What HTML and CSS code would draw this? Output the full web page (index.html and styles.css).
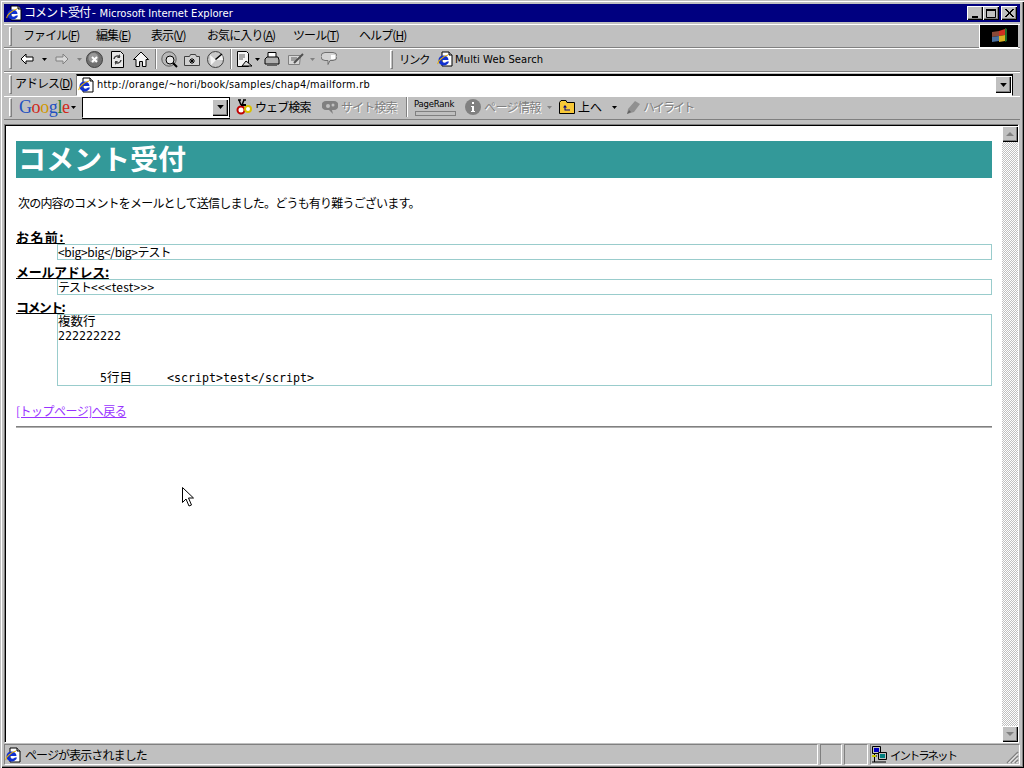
FILE: index.html
```html
<!DOCTYPE html>
<html lang="ja">
<head>
<meta charset="utf-8">
<title>コメント受付</title>
<link rel="stylesheet" href="styles.css">
</head>
<body>
<svg class="defs" width="0" height="0">
  <symbol id="ie" viewBox="0 0 16 16">
    <path d="M5 1h7l3 3v11H5z" fill="#fff" stroke="#000"/>
    <path d="M12 1v3h3" fill="#c0c0c0" stroke="#000"/>
    <path d="M1.500 9a5 4.500 0 0 1 10 0H4.500a3 2.500 0 0 0 5.500 1.500h2A5 4.500 0 0 1 1.500 9z" fill="#1030d0"/>
    <path d="M1 13C0 11 6 5 11 4" fill="none" stroke="#e8b000" stroke-width="1.200"/>
  </symbol>
  <symbol id="drop" viewBox="0 0 5 3"><path d="M0 0h5L2.500 3z"/></symbol>
</svg>
<div class="window">
  <header class="titlebar">
    <svg class="title-icon" width="16" height="16"><use href="#ie"/></svg>
    <span class="title-text">コメント受付 - <span class="title-latin">Microsoft Internet Explorer</span></span>
    <div class="winbtns">
      <button class="winbtn"><svg width="13" height="11"><rect x="3" y="8" width="6" height="2"/></svg></button>
      <button class="winbtn"><svg width="13" height="11"><path d="M1.500 1.500h9v8h-9z" fill="none" stroke="#000"/><rect x="1" y="1" width="10" height="2"/></svg></button>
      <button class="winbtn gap"><svg width="13" height="11"><path d="M2 1l8 8M3 1l8 8M10 1L2 9M11 1L3 9" stroke="#000" fill="none"/></svg></button>
    </div>
  </header>

  <div class="band menu-band">
    <i class="handle"></i>
    <nav class="menu">
      <span>ファイル(<u>F</u>)</span><span>編集(<u>E</u>)</span><span>表示(<u>V</u>)</span><span>お気に入り(<u>A</u>)</span><span>ツール(<u>T</u>)</span><span>ヘルプ(<u>H</u>)</span>
    </nav>
    <div class="throbber">
      <svg width="20" height="18" viewBox="0 0 20 18">
        <path d="M3 5l7-1v5l-7 1z" fill="#8a4a38"/><path d="M10 4l6-2v6l-6 1z" fill="#d03020"/>
        <path d="M3 10l7-1v5l-7 1z" fill="#4a70a0"/><path d="M10 9l6-1v6l-6 1z" fill="#d8b020"/>
        <path d="M16 1l2 1v12l-2 1z" fill="#1f6a2a"/>
      </svg>
    </div>
  </div>

  <div class="band tool-band">
    <i class="handle"></i>
    <svg class="ml8" width="14" height="12" viewBox="0 0 14 12"><path d="M6 1L1 6l5 5V8h7V4H6z" fill="#fff" stroke="#000"/></svg>
    <svg class="dd ml8" width="5" height="3"><use href="#drop"/></svg>
    <svg class="ml8" width="14" height="12" viewBox="0 0 14 12"><path d="M8 1l5 5-5 5V8H1V4h7z" fill="#d8d8d8" stroke="#808080"/></svg>
    <svg class="dd grey ml8" width="5" height="3"><use href="#drop"/></svg>
    <svg class="ml4" width="17" height="17" viewBox="0 0 17 17"><circle cx="8.500" cy="8.500" r="8" fill="#707070" stroke="#404040"/><circle cx="7.500" cy="7" r="5" fill="#9a9a9a"/><path d="M6 6l5 5M11 6l-5 5" stroke="#fff" stroke-width="2"/></svg>
    <svg class="ml7" width="15" height="17" viewBox="0 0 15 17"><path d="M1.500.5h9l3 3v13h-12z" fill="#e8e8e8" stroke="#000"/><path d="M4 8a3.500 3.500 0 0 1 6-2M11 9a3.500 3.500 0 0 1-6 2" fill="none" stroke="#404040" stroke-width="1.500"/><path d="M10 3v4H7zM5 14v-4h3z" fill="#404040"/></svg>
    <svg class="ml8" width="16" height="16" viewBox="0 0 16 16"><path d="M8 1L0.500 8.500h2.500v7h3.500v-5h3v5H13v-7h2.500z" fill="#f4f4f4" stroke="#000"/></svg>
    <i class="sep ml6"></i>
    <svg class="ml4" width="17" height="17" viewBox="0 0 17 17"><circle cx="8" cy="8" r="7.200" fill="#b8b8b8" stroke="#606060"/><circle cx="9" cy="9" r="4" fill="#e8e8e8" stroke="#000"/><path d="M12 12l4 4" stroke="#000" stroke-width="2"/></svg>
    <svg class="ml6" width="16" height="14" viewBox="0 0 16 14"><path d="M.5 4.500h5l1-2h5l1 2h3v9H.5z" fill="#d0d0d0" stroke="#404040"/><path d="M8 6v6M5 9h6M6 7l4 4M10 7l-4 4" stroke="#000"/></svg>
    <svg class="ml7" width="17" height="17" viewBox="0 0 17 17"><circle cx="8.500" cy="8.500" r="8" fill="#c8c8c8" stroke="#404040"/><path d="M3 4l6 5-5 5zM9 9l6-6 1 6z" fill="#f4f4f4"/><path d="M8.500 8.500L15 3" stroke="#000" stroke-width="1.500"/></svg>
    <i class="sep ml6"></i>
    <svg class="ml5" width="16" height="16" viewBox="0 0 16 16"><path d="M.5.5h9l2 2v13H.5z" fill="#f4f4f4" stroke="#000"/><path d="M2 4h6M2 6h6M2 8h4" stroke="#606060"/><path d="M5 15l4-5 6 5z" fill="#d8d8d8" stroke="#000"/></svg>
    <svg class="dd ml2" width="5" height="3"><use href="#drop"/></svg>
    <svg class="ml4" width="16" height="15" viewBox="0 0 16 15"><path d="M4 .5h8v6H4z" fill="#fff" stroke="#000"/><path d="M1 7l2-2h11l1 3v4H1z" fill="#b0b0b0" stroke="#000"/><path d="M3 12h10v2H3z" fill="#606060"/></svg>
    <svg class="ml8" width="16" height="14" viewBox="0 0 16 14"><path d="M.5 3.500h12l-1 9H.5z" fill="#d8d8d8" stroke="#808080"/><path d="M3 6h6M3 8h6" stroke="#606060"/><path d="M6 11l9-9" stroke="#505050" stroke-width="2"/></svg>
    <svg class="dd grey ml6" width="5" height="3"><use href="#drop"/></svg>
    <svg class="ml6" width="16" height="14" viewBox="0 0 16 14"><path d="M4 .5h8a3.500 3.500 0 0 1 0 8H9l-2 4v-4H4a3.500 3.500 0 0 1 0-8z" fill="#d4d4d4" stroke="#707070"/><path d="M10 3h4v4h-4z" fill="#fff"/></svg>
    <i class="handle links-handle"></i>
    <span class="label links-label">リンク</span>
    <svg class="ml8" width="16" height="16"><use href="#ie"/></svg>
    <span class="linktext">Multi Web Search</span>
  </div>

  <div class="band addr-band">
    <i class="handle"></i>
    <span class="label addr-label">アドレス(<u>D</u>)</span>
    <div class="addr-field">
      <svg class="addr-icon" width="16" height="16"><use href="#ie"/></svg>
      <span class="url">http://orange/~hori/book/samples/chap4/mailform.rb</span>
      <span class="combo-btn"><svg width="7" height="4"><use href="#drop"/></svg></span>
    </div>
  </div>

  <div class="band google-band">
    <i class="handle"></i>
    <span class="google"><b class="g-b">G</b><b class="g-r">o</b><b class="g-y">o</b><b class="g-b">g</b><b class="g-g">l</b><b class="g-r">e</b></span>
    <svg class="dd ml2" width="5" height="3"><use href="#drop"/></svg>
    <div class="g-input"><span class="combo-btn"><svg width="7" height="4"><use href="#drop"/></svg></span></div>
    <svg class="ml6" width="16" height="16" viewBox="0 0 16 16"><path d="M3 1l2 5M8 1L6 6M2 1h3M7 1h3" stroke="#000" stroke-width="1.500" fill="none"/><circle cx="5" cy="11" r="3.500" fill="#fff" stroke="#c00000" stroke-width="2"/><circle cx="12" cy="10" r="3" fill="#fff" stroke="#d8c000" stroke-width="2"/><path d="M5 6h5" stroke="#000" stroke-width="2"/></svg>
    <span class="label ml3 search-l">ウェブ検索</span>
    <svg class="ml12" width="16" height="15" viewBox="0 0 16 15"><path d="M4 1h8a4 4 0 0 1 0 9h-2l1 4-4-4H4A4.500 4.500 0 0 1 4 1z" fill="#808080"/><circle cx="6" cy="6" r="2" fill="#c0c0c0"/><circle cx="11" cy="5" r="1.500" fill="#c0c0c0"/></svg>
    <span class="label off ml3 site-l">サイト検索</span>
    <i class="sep ml11"></i>
    <div class="pagerank"><span>PageRank</span><i></i></div>
    <svg class="ml8" width="16" height="16" viewBox="0 0 16 16"><circle cx="8" cy="8" r="8" fill="#808080"/><path d="M7 3h2v2H7zM6 7h3v5h1v1H6v-1h1V8H6z" fill="#fff"/></svg>
    <span class="label off ml3 info-l">ページ情報</span>
    <svg class="dd grey ml5" width="5" height="3"><use href="#drop"/></svg>
    <svg class="ml7" width="16" height="14" viewBox="0 0 16 14"><path d="M.5 2.500L2 .5h5l1 2h7.500v11H.5z" fill="#f8c838" stroke="#000"/><path d="M6 5L4 7.500h1.500v3H11v-1H6.500v-2H8z" fill="#000080"/></svg>
    <span class="label ml3 up-l">上へ</span>
    <svg class="dd ml10" width="5" height="3"><use href="#drop"/></svg>
    <svg class="ml9" width="15" height="15" viewBox="0 0 15 15"><path d="M1 14l1-5 7-8 5 3-6 8z" fill="#909090"/><path d="M1 14l2-4 2 2z" fill="#606060"/></svg>
    <span class="label off ml2 hl-l">ハイライト</span>
  </div>

  <div class="frame">
    <main class="page">
      <h1 class="heading">コメント受付</h1>
      <p class="lead">次の内容のコメントをメールとして送信しました。どうも有り難うございます。</p>
      <dl class="fields">
        <dt class="dt-name">お名前:</dt>
        <dd class="dd-name">&lt;big&gt;big&lt;/big&gt;<span class="kana">テスト</span></dd>
        <dt>メールアドレス:</dt>
        <dd class="dd-mail"><span class="kana">テスト</span>&lt;&lt;&lt;test&gt;&gt;&gt;</dd>
        <dt class="dt-comment">コメント:</dt>
        <dd class="multi"><pre><span class="kj">複数行</span>
222222222


      5<span class="kj">行目</span>     &lt;script&gt;test&lt;/script&gt;</pre></dd>
      </dl>
      <p class="back"><a href="#top">[トップページ]へ戻る</a></p>
      <hr class="rule">
      <svg class="cursor" width="12" height="20" viewBox="0 0 12 20"><path d="M.5.5v15l3.500-3.500 3 7 2.500-1-3-7h5z" fill="#fff" stroke="#000"/></svg>
    </main>
    <aside class="scrollbar">
      <span class="sb-btn"><i class="tri-up"></i></span>
      <span class="sb-track"></span>
      <span class="sb-btn"><i class="tri-down"></i></span>
    </aside>
  </div>

  <footer class="status">
    <div class="st main-st"><svg width="16" height="16"><use href="#ie"/></svg><span>ページが表示されました</span></div>
    <div class="st s1"></div>
    <div class="st s2"></div>
    <div class="st zone">
      <svg width="17" height="17" viewBox="0 0 17 17"><path d="M1.500.5h8v7h-8z" fill="#c0c0c0" stroke="#000"/><rect x="3" y="2" width="5" height="4" fill="#0000c0"/><path d="M7.500 6.500h8v7h-8z" fill="#c0c0c0" stroke="#000"/><rect x="9" y="8" width="5" height="4" fill="#008080"/><path d="M1 10h5M3.500 8v8M1 16h14" stroke="#000"/><path d="M1 10h4" stroke="#c8c800" stroke-width="2"/></svg>
      <span>イントラネット</span>
      <svg class="grip" width="14" height="14" viewBox="0 0 14 14"><path d="M13 2L2 13M13 6l-7 7M13 10l-3 3" stroke="#808080" stroke-width="1.500"/><path d="M13 3.500L3.500 13M13 7.500L7.500 13M13 11.500L11.500 13" stroke="#fff"/></svg>
    </div>
  </footer>
</div>
</body>
</html>
```
FILE: styles.css
```css
* { box-sizing: border-box; }
html, body { margin: 0; padding: 0; overflow: hidden; }
body { font-family: "Noto Sans CJK JP", "Liberation Sans", sans-serif; color: #000; background: #c0c0c0; }
.defs { position: absolute; }
svg { display: block; flex: none; }
i { display: block; flex: none; }

.window {
  width: 1024px; height: 768px; display: flex; flex-direction: column;
  background: #c0c0c0; padding: 3px 4px 3px 3px;
  border-top: 1px solid #c0c0c0; border-left: 1px solid #c0c0c0;
  box-shadow: inset 1px 1px 0 #fff, inset -1px -1px 0 #000, inset -2px -2px 0 #808080;
  position: relative;
}

.titlebar {
  height: 18px; margin-bottom: 2px; background: #000080; color: #fff; display: flex; align-items: center;
  padding-left: 2px; flex: none;
}
.title-icon { margin-right: 2px; }
.title-text { font-size: 12px; letter-spacing: -1px; line-height: 18px; white-space: pre; }
.title-latin { font-family: "DejaVu Sans", sans-serif; font-size: 10px; letter-spacing: 0; margin-left: 3px; }
.winbtns { margin-left: auto; display: flex; padding-right: 3px; }
.winbtn {
  width: 16px; height: 14px; padding: 0 0 0 1px; margin: 0; border: 0; background: #c0c0c0;
  box-shadow: inset 1px 1px 0 #fff, inset -1px -1px 0 #000, inset -2px -2px 0 #808080;
  display: flex; align-items: center; justify-content: center;
}
.winbtn.gap { margin-left: 2px; }

.band {
  height: 24px; flex: none; display: flex; align-items: center; padding-left: 5px;
  border-top: 1px solid #fff; border-bottom: 1px solid #808080;
}
.handle { width: 3px; height: 19px; background: #c0c0c0; border: 1px solid; border-color: #fff #808080 #808080 #fff; }
.sep { width: 2px; height: 20px; border-left: 1px solid #808080; border-right: 1px solid #fff; }
.ml2 { margin-left: 2px; } .ml3 { margin-left: 3px; } .ml4 { margin-left: 4px; } .ml5 { margin-left: 5px; } .ml6 { margin-left: 6px; }
.ml7 { margin-left: 7px; } .ml8 { margin-left: 8px; } .ml9 { margin-left: 9px; } .ml10 { margin-left: 10px; }
.ml11 { margin-left: 11px; } .ml12 { margin-left: 12px; }
.dd { fill: #000; }
.dd.grey { fill: #808080; }

.label { font-size: 12px; line-height: 18px; white-space: nowrap; letter-spacing: -.9px; }
.off { color: #808080; text-shadow: 1px 1px 0 #fff; }

.menu-band { position: relative; padding-right: 2px; }
.menu { display: flex; margin-left: 11px; margin-bottom: 3px; font-size: 12px; letter-spacing: -.9px; line-height: 18px; white-space: nowrap; }
.menu span:nth-child(1) { width: 73px; } .menu span:nth-child(2) { width: 55px; }
.menu span:nth-child(3) { width: 56px; } .menu span:nth-child(4) { width: 86px; }
.menu span:nth-child(5) { width: 66px; }
.throbber {
  margin-left: auto; width: 39px; height: 23px; background: #000; display: flex; align-items: center; justify-content: center;
  border-left: 1px solid #fff; border-bottom: 1px solid #fff;
}

.tool-band { padding-bottom: 2px; }
.links-handle { margin-left: 53px; }
.links-label { margin-left: 6px; font-size: 11.500px; letter-spacing: -1.500px; }
.linktext { font-family: "DejaVu Sans", sans-serif; font-size: 10px; margin-left: 2px; letter-spacing: .08px; white-space: nowrap; }

.addr-band { border-bottom: 0; padding-right: 7px; }
.addr-label { margin-left: 3px; margin-bottom: 3px; width: 61px; letter-spacing: -1px; }
.addr-field {
  flex: 1; height: 22px; background: #fff; display: flex; align-items: center; padding-left: 1px; padding-right: 1px;
  border: 1px solid; border-color: #000 #000 #fff #808080; box-shadow: inset 0 1px 0 #000;
}
.addr-icon { margin-right: 3px; }
.url { font-family: "DejaVu Sans", sans-serif; font-size: 9.800px; white-space: nowrap; letter-spacing: .26px; }
.combo-btn {
  margin-left: auto; width: 16px; height: 17px; background: #c0c0c0; display: flex; align-items: center; justify-content: center;
  box-shadow: inset 1px 1px 0 #fff, inset -1px -1px 0 #000, inset -2px -2px 0 #808080;
}

.google-band { padding-bottom: 2px; }
.google { font-family: "Liberation Serif", serif; font-size: 18px; margin-left: 7px; line-height: 22px; letter-spacing: -.4px; width: 50px; }
.google b { font-weight: 400; }
.g-b { color: #2050c0; } .g-r { color: #d02818; } .g-y { color: #d09800; } .g-g { color: #208030; }
.g-input {
  width: 148px; height: 21px; margin-left: 6px; background: #fff; display: flex; align-items: center; padding-right: 1px;
  border: 1px solid; border-color: #000 #000 #fff #000; box-shadow: 0 1px 0 #000;
}
.search-l { width: 55px; }
.site-l { width: 54px; }
.pagerank { margin-left: 6px; width: 43px; }
.pagerank span { display: block; font-family: "DejaVu Sans", sans-serif; font-size: 8.500px; line-height: 11px; letter-spacing: -.2px; white-space: nowrap; }
.pagerank i { height: 5px; margin: 1px 1px 0; border: 1px solid #808080; }
.info-l { width: 58px; letter-spacing: -.6px; }
.up-l { width: 24px; letter-spacing: 0; }
.hl-l { width: 50px; letter-spacing: -1.900px; }

.frame {
  flex: 1; display: flex; margin-top: 4px; min-height: 0;
  border: 1px solid; border-color: #808080 #fff #fff #808080; margin-right: 1px;
  box-shadow: inset 1px 1px 0 #000;
}
.page { flex: 1; background: #fff; padding: 15px 10px 0; position: relative; margin: 1px 0 0 1px; min-width: 0; }
.heading {
  margin: 0; height: 37px; background: #339999; color: #fff; padding-left: 2px;
  font-size: 28px; line-height: 35px; font-weight: 700;
}
.lead { margin: 17px 0 0 2px; font-size: 12px; letter-spacing: -.8px; line-height: 16px; height: 16px; white-space: nowrap; }
.fields { margin: 18px 0 0; }
.fields dt { font-size: 13px; font-weight: 700; text-decoration: underline; line-height: 15px; height: 15px; letter-spacing: -.3px; }
.fields dt.dt-name { letter-spacing: 1.400px; }
.fields dt.dt-comment { letter-spacing: -1.600px; }
.fields dd {
  margin: 0 0 4px 41px; height: 16px; border: 1px solid #99cccc; font-size: 12px; line-height: 14px;
  white-space: nowrap; padding: 0;
}
.dd-name { letter-spacing: -.3px; }
.dd-mail { letter-spacing: .25px; }
.kana { letter-spacing: -1px; }
.fields dd.multi { height: 72px; padding-left: 0; }
.multi pre { margin: 0; font-family: "DejaVu Sans Mono", monospace; font-size: 11.630px; line-height: 14px; }
.kj { font-family: "Noto Sans CJK JP", sans-serif; font-size: 12.500px; line-height: 0; }
.back { margin: 17px 0 0; font-size: 12px; line-height: 16px; letter-spacing: -.5px; }
.back a { color: #9933ff; }
.rule { margin: 7px 0 0; height: 2px; border: 0; background: #808080; border-bottom: 1px solid #b0b0b0; }
.cursor { position: absolute; left: 176px; top: 361px; }

.scrollbar { width: 16px; display: flex; flex-direction: column; flex: none; margin-top: 1px; }
.sb-btn {
  height: 16px; flex: none; background: #c0c0c0; display: flex; align-items: center; justify-content: center;
  box-shadow: inset 1px 1px 0 #fff, inset -1px -1px 0 #000, inset -2px -2px 0 #808080;
}
.sb-track {
  flex: 1;
  background-color: #fff;
  background-image: conic-gradient(#c0c0c0 25%, transparent 0 50%, #c0c0c0 0 75%, transparent 0);
  background-size: 2px 2px;
}
.tri-up { width: 0; height: 0; border: 4px solid transparent; border-top: 0; border-bottom: 4px solid #808080; }
.tri-down { width: 0; height: 0; border: 4px solid transparent; border-bottom: 0; border-top: 4px solid #808080; }

.status { height: 21px; flex: none; display: flex; gap: 2px; margin: 1px 0 0; }
.st { border: 1px solid; border-color: #808080 #fff #fff #808080; height: 21px; display: flex; align-items: center; font-size: 12px; letter-spacing: -.9px; white-space: nowrap; }
.main-st { flex: 1; padding-left: 0; }
.main-st span { margin-left: 4px; }
.s1 { width: 22px; } .s2 { width: 24px; }
.zone { width: 150px; position: relative; padding-left: 0; }
.zone span { margin-left: 2px; font-size: 11.500px; letter-spacing: -2.100px; }
.grip { position: absolute; right: 0; bottom: 0; }
```
